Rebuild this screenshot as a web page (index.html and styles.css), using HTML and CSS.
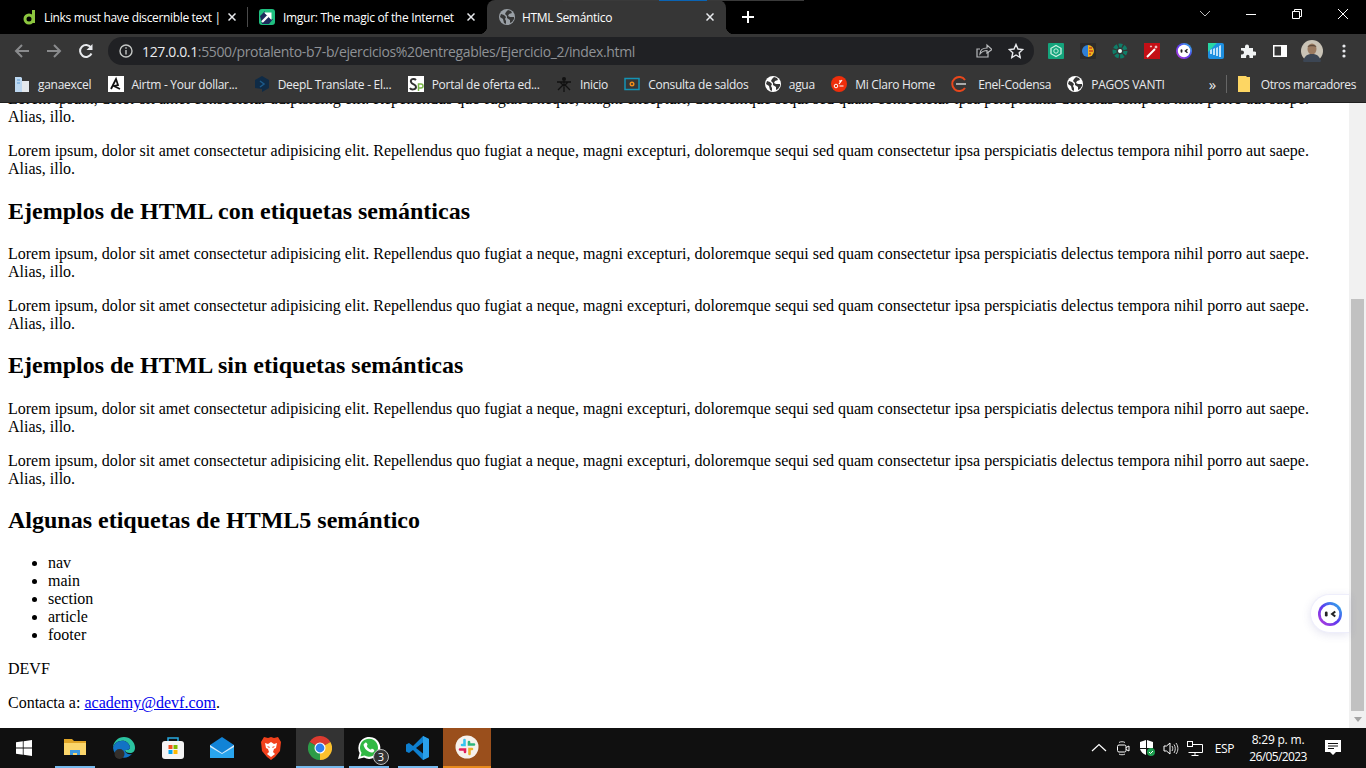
FILE: index.html
```html
<!DOCTYPE html>
<html lang="es">
<head>
  <meta charset="UTF-8" />
  <title>HTML Semántico</title>
  <link rel="stylesheet" href="styles.css">
</head>
<body>

  <svg class="defs" width="0" height="0">
    <symbol id="globe" viewBox="0 0 16 16">
      <circle cx="8" cy="8" r="8" fill="currentColor"/>
      <path d="M2 5l3 1 2 2-1 2 1 2v3l-2-1-1-4-3-2zM9 1l3 1 1 2-3 1-1 2 2 1 4 0 0 2-2 3-2 1 0-3-3-2 0-2-2-2 1-2z" fill="var(--land)"/>
    </symbol>
    <symbol id="tab-close" viewBox="0 0 8 8">
      <path d="M.5.500l7 7M7.500.500l-7 7" stroke="#e8eaed" stroke-width="1.500"/>
    </symbol>
  </svg>

  <!-- Tab strip -->
  <div class="tabstrip">
    <div class="screen-bar"><span class="screen-bar-blue"></span></div>
    <div class="tab first">
      <svg class="fav" viewBox="0 0 16 16"><circle cx="7" cy="10" r="4" fill="none" stroke="#8cc63f" stroke-width="3"/><path d="M11.500 1v13" stroke="#8cc63f" stroke-width="3"/></svg>
      <span class="tab-title">Links must have discernible text |</span>
      <svg class="tab-x"><use href="#tab-close"/></svg>
    </div>
    <div class="tab-sep"></div>
    <div class="tab">
      <svg class="fav" viewBox="0 0 16 16"><rect width="16" height="16" rx="3" fill="#1fbf80"/><path d="M1 7l5-5v3l5 0 0 5h3l-4 5H3z" fill="#1d2a5c"/><path d="M3 13l6-6" stroke="#fff" stroke-width="2.400"/><path d="M5 3.500h7.500V11z" fill="#fff"/></svg>
      <span class="tab-title">Imgur: The magic of the Internet</span>
      <svg class="tab-x"><use href="#tab-close"/></svg>
    </div>
    <div class="tab active">
      <svg class="fav globe-grey"><use href="#globe"/></svg>
      <span class="tab-title">HTML Semántico</span>
      <svg class="tab-x"><use href="#tab-close"/></svg>
    </div>
    <svg class="new-tab" viewBox="0 0 12 12"><path d="M6 0v12M0 6h12" stroke="#fff" stroke-width="2"/></svg>
    <div class="win-controls">
      <svg class="win-btn" viewBox="0 0 46 14"><path d="M18 4l5 5 5-5" fill="none" stroke="#bbb"/></svg>
      <svg class="win-btn" viewBox="0 0 46 14"><path d="M18 7.500h10" stroke="#fff"/></svg>
      <svg class="win-btn" viewBox="0 0 46 14"><path d="M18.500 4.500h7v7h-7zM20.500 4.500v-2h7v7h-2" fill="none" stroke="#fff"/></svg>
      <svg class="win-btn" viewBox="0 0 46 14"><path d="M18 2l10 10M28 2l-10 10" stroke="#fff"/></svg>
    </div>
  </div>

  <!-- Toolbar -->
  <div class="toolbar">
    <svg class="tool" viewBox="0 0 16 16"><path d="M15 8H2M8 2L2 8l6 6" fill="none" stroke="#8a8b8d" stroke-width="2"/></svg>
    <svg class="tool" viewBox="0 0 16 16"><path d="M1 8h13M8 2l6 6-6 6" fill="none" stroke="#8a8b8d" stroke-width="2"/></svg>
    <svg class="tool" viewBox="0 0 16 16"><path d="M13.500 10.500A6 6 0 1 1 13 4.500" fill="none" stroke="#e8eaed" stroke-width="2"/><path d="M14.500 1v6h-6z" fill="#e8eaed"/></svg>
    <div class="omnibox">
      <svg class="info" viewBox="0 0 14 14"><circle cx="7" cy="7" r="6" fill="none" stroke="#c4c7c5" stroke-width="1.400"/><path d="M7 6v4.500M7 3.300v1.500" stroke="#c4c7c5" stroke-width="1.400"/></svg>
      <span class="url"><b>127.0.0.1</b>:5500/protalento-b7-b/ejercicios%20entregables/Ejercicio_2/index.html</span>
      <svg class="omni-icon" viewBox="0 0 16 16"><path d="M12 9v5H1V6h3" fill="none" stroke="#b8babc" stroke-width="1.200"/><path d="M4 11c0-4 3-6 7-6V2l5 4.500L11 10V7.500c-3 0-5 1-7 3.500z" fill="none" stroke="#b8babc" stroke-width="1.200"/></svg>
      <svg class="omni-icon" viewBox="0 0 16 16"><path d="M8 1.500l2 4.500 4.800.5-3.600 3.200 1 4.800L8 12l-4.200 2.500 1-4.800L1.200 6.500 6 6z" fill="none" stroke="#e8eaed" stroke-width="1.400"/></svg>
    </div>
    <div class="ext-row">
      <svg class="ext" viewBox="0 0 16 16"><rect width="16" height="16" rx="1" fill="#14a47c"/><path d="M8 2.500l5 2.800v5.400l-5 2.800-5-2.800V5.300z" fill="none" stroke="#c9f1e2" stroke-width="1.300"/><circle cx="8" cy="8" r="2.200" fill="none" stroke="#c9f1e2"/></svg>
      <svg class="ext" viewBox="0 0 16 16"><rect width="16" height="16" rx="1" fill="#2b2b2b"/><path d="M8 2a6 6 0 0 0 0 12z" fill="#2f7fd6"/><path d="M8 2a6 6 0 0 1 0 12z" fill="#f0b31c"/><path d="M9 5h3M9 8h4M9 11h2" stroke="#c9451f" stroke-width="1.300"/></svg>
      <svg class="ext" viewBox="0 0 16 16"><circle cx="8" cy="8" r="5.500" fill="none" stroke="#0f7d68" stroke-width="4" stroke-dasharray="3.500 1.300"/><circle cx="8" cy="8" r="2" fill="#e8fff8"/></svg>
      <svg class="ext" viewBox="0 0 16 16"><rect width="16" height="16" fill="#c40f16"/><path d="M3 14L11 6" stroke="#fff" stroke-width="2"/><path d="M12 2l.6 1.400L14 4l-1.400.6L12 6l-.6-1.400L10 4l1.400-.6zM7 2l.4 1L8.400 3.400l-1 .4L7 5l-.4-1.200-1-.4 1-.4z" fill="#fff"/></svg>
      <svg class="ext" viewBox="0 0 16 16"><use href="#mascot"/></svg>
      <svg class="ext" viewBox="0 0 16 16"><rect width="16" height="16" rx="2" fill="#1d8fe0"/><path d="M0 0h9L0 9z" fill="#27d6a5"/><path d="M2 7l2-1v5H2zM5 6l2-1v7H5zM8 5l2-1v9H8zM11 3l2-1v12h-2z" fill="#bfe2fb"/></svg>
      <svg class="ext" viewBox="0 0 16 16"><path d="M1 5h4V3.500a2 2 0 0 1 4 0V5h4v3.500h1.500a2 2 0 0 1 0 4H13V15H9.500v-1.500a1.700 1.700 0 0 0-3.400 0V15H1v-3.500h1a2 2 0 0 0 0-4H1z" fill="#f1f3f4"/></svg>
      <svg class="ext" viewBox="0 0 16 16"><rect x="1" y="2" width="14" height="12" fill="#fff"/><rect x="2.500" y="3.500" width="6.500" height="9" fill="#363636"/></svg>
      <svg class="avatar" viewBox="0 0 22 22"><circle cx="11" cy="11" r="11" fill="#c9c3b6"/><ellipse cx="11" cy="9" rx="4.500" ry="5.500" fill="#9a7a60"/><path d="M6.500 7c1-3 8-3 9 0-2-1-7-1-9 0z" fill="#5c4a3c"/><path d="M2 21c2-6 5-7 9-7s7 1 9 7a11 11 0 0 1-18 0z" fill="#3c4654"/></svg>
      <svg class="ext" viewBox="0 0 16 16"><circle cx="8" cy="3" r="1.600" fill="#e8eaed"/><circle cx="8" cy="8" r="1.600" fill="#e8eaed"/><circle cx="8" cy="13" r="1.600" fill="#e8eaed"/></svg>
    </div>
  </div>

  <!-- Bookmarks bar -->
  <div class="bookmarks">
    <div class="bm"><svg class="fav" viewBox="0 0 16 16"><path d="M1 1h6l1 1v14H1z" fill="#bcd7f0"/><path d="M8 5h7v11H8z" fill="#e4e8ec"/><path d="M3 4h3M3 7h3" stroke="#5b9bd5"/></svg>ganaexcel</div>
    <div class="bm"><svg class="fav" viewBox="0 0 16 16"><rect width="16" height="16" fill="#fff"/><path d="M3 13L8 3l2 6-4 1 6 3" fill="none" stroke="#111" stroke-width="1.800"/></svg>Airtm - Your dollar...</div>
    <div class="bm"><svg class="fav" viewBox="0 0 16 16"><path d="M8 0l7 4v8l-7 4v-3l-7-1V4z" fill="#0f2b46"/><path d="M6 5l4 3-4 3" fill="none" stroke="#1c5a8a" stroke-width="1.500"/></svg>DeepL Translate - El...</div>
    <div class="bm"><svg class="fav" viewBox="0 0 16 16"><rect width="16" height="16" fill="#fff"/><path d="M8 4C6 2 2 3 3 6s5 2 5 5-5 3-6 1" fill="none" stroke="#333" stroke-width="2"/><path d="M10.500 15V8h2.500a2 2 0 0 1 0 4h-2.500" fill="none" stroke="#7ab648" stroke-width="1.500"/></svg>Portal de oferta ed...</div>
    <div class="bm"><svg class="fav" viewBox="0 0 16 16"><circle cx="8" cy="3" r="2" fill="#111"/><path d="M1 6l14 0M8 5v11M2 14l6-6 6 6M4 6l4 4 4-4" stroke="#111" stroke-width="1.300" fill="none"/></svg>Inicio</div>
    <div class="bm"><svg class="fav" viewBox="0 0 16 16"><rect x="1" y="2.500" width="14" height="11" fill="none" stroke="#1493b5" stroke-width="1.500"/><circle cx="8" cy="8" r="2.500" fill="#f08c1a"/><circle cx="8" cy="8" r="1" fill="#333"/></svg>Consulta de saldos</div>
    <div class="bm"><svg class="fav globe-white"><use href="#globe"/></svg>agua</div>
    <div class="bm"><svg class="fav" viewBox="0 0 16 16"><circle cx="8" cy="8" r="8" fill="#ee2e0b"/><circle cx="5" cy="10" r="1.800" fill="none" stroke="#fff"/><path d="M8 8l3-4M8.500 10h4M9 4v2" stroke="#fff" stroke-width="1.200"/></svg>Mi Claro Home</div>
    <div class="bm enel"><svg class="fav" viewBox="0 0 16 16"><path d="M14 4A7 7 0 1 0 14 12" fill="none" stroke="#e8471c" stroke-width="2"/><path d="M5 8h10" stroke="#aaa" stroke-width="2"/></svg>Enel-Codensa</div>
    <div class="bm"><svg class="fav globe-white"><use href="#globe"/></svg>PAGOS VANTI</div>
    <div class="bm-end">
      <span class="bm-more">»</span>
      <span class="bm-sep"></span>
      <div class="bm bm-other"><svg class="folder" viewBox="0 0 12 16"><path d="M0 0h8l1 1h3v15H0z" fill="#fdd663"/></svg>Otros marcadores</div>
    </div>
  </div>

  <!-- Page -->
  <div class="viewport">
    <div class="content">
      <p>Lorem ipsum, dolor sit amet consectetur adipisicing elit. Repellendus quo fugiat a neque, magni excepturi, doloremque sequi sed quam consectetur ipsa perspiciatis delectus tempora nihil porro aut saepe. Alias, illo.</p>
      <p>Lorem ipsum, dolor sit amet consectetur adipisicing elit. Repellendus quo fugiat a neque, magni excepturi, doloremque sequi sed quam consectetur ipsa perspiciatis delectus tempora nihil porro aut saepe. Alias, illo.</p>
      <h2>Ejemplos de HTML con etiquetas semánticas</h2>
      <p>Lorem ipsum, dolor sit amet consectetur adipisicing elit. Repellendus quo fugiat a neque, magni excepturi, doloremque sequi sed quam consectetur ipsa perspiciatis delectus tempora nihil porro aut saepe. Alias, illo.</p>
      <p>Lorem ipsum, dolor sit amet consectetur adipisicing elit. Repellendus quo fugiat a neque, magni excepturi, doloremque sequi sed quam consectetur ipsa perspiciatis delectus tempora nihil porro aut saepe. Alias, illo.</p>
      <h2>Ejemplos de HTML sin etiquetas semánticas</h2>
      <p>Lorem ipsum, dolor sit amet consectetur adipisicing elit. Repellendus quo fugiat a neque, magni excepturi, doloremque sequi sed quam consectetur ipsa perspiciatis delectus tempora nihil porro aut saepe. Alias, illo.</p>
      <p>Lorem ipsum, dolor sit amet consectetur adipisicing elit. Repellendus quo fugiat a neque, magni excepturi, doloremque sequi sed quam consectetur ipsa perspiciatis delectus tempora nihil porro aut saepe. Alias, illo.</p>
      <h2>Algunas etiquetas de HTML5 semántico</h2>
      <ul>
        <li>nav</li>
        <li>main</li>
        <li>section</li>
        <li>article</li>
        <li>footer</li>
      </ul>
      <p>DEVF</p>
      <p>Contacta a: <a href="#">academy@devf.com</a>.</p>
    </div>
    <div class="scrollbar">
      <div class="thumb-track"><div class="thumb"></div></div>
      <div class="arrow-down"></div>
    </div>
    <div class="widget">
      <svg class="widget-icon" viewBox="0 0 16 16">
        <symbol id="mascot" viewBox="0 0 16 16">
          <defs>
            <linearGradient id="ring" x1="0" y1="1" x2="1" y2="0">
              <stop offset="0" stop-color="#c13bd8"/>
              <stop offset=".5" stop-color="#5a3bf0"/>
              <stop offset="1" stop-color="#27c3e8"/>
            </linearGradient>
          </defs>
          <circle cx="8" cy="8" r="8" fill="url(#ring)"/>
          <circle cx="8" cy="8" r="6.200" fill="#fff"/>
          <rect x="4.600" y="6.300" width="1.800" height="3.400" rx=".9" fill="#222"/>
          <path d="M11.500 6.300L9.400 8l2.100 1.700" fill="none" stroke="#222" stroke-width="1.400"/>
        </symbol>
        <use href="#mascot"/>
      </svg>
    </div>
  </div>

  <!-- Taskbar -->
  <div class="taskbar">
    <div class="start">
      <svg class="start-icon" viewBox="0 0 16 16"><path d="M0 2.300l6.800-1v6.300H0zM7.600 1.200L16 0v7.600H7.600zM0 8.400h6.800v6.300l-6.800-1zM7.600 8.400H16V16l-8.400-1.200z" fill="#fff"/></svg>
    </div>
    <div class="task-apps">
      <div class="task open"><svg class="task-icon" viewBox="0 0 24 24"><path d="M1 3h8l2 2h12v4H1z" fill="#e0a526"/><path d="M1 7h22v12H1z" fill="#fbd66b"/><path d="M7 19v-5h10v5h-3v-2h-4v2z" fill="#3f9ae0"/></svg></div>
      <div class="task"><svg class="task-icon" viewBox="0 0 24 24"><path d="M1 12a11 11 0 0 1 22 0c0 3-2 5-5 5-3 0-5-1-5-3 2 0 5 0 5-3-1-4-5-7-9-6-4 0-7 3-8 7z" fill="#2bc3a0"/><path d="M1 12c1-4 4-7 8-7 4-1 8 2 9 6 0 3-3 3-5 3 0 3 3 5 7 4a11 11 0 0 1-19-6z" fill="#1273c4"/><circle cx="7.500" cy="18" r="5" fill="#33302d"/></svg></div>
      <div class="task"><svg class="task-icon" viewBox="0 0 24 24"><path d="M7 6V2h10v4" fill="none" stroke="#27a9e0" stroke-width="1.500"/><rect x="1" y="5" width="22" height="18" rx="3" fill="#f4f4f4"/><rect x="7.500" y="9" width="4" height="4" fill="#f25022"/><rect x="12.500" y="9" width="4" height="4" fill="#7fba00"/><rect x="7.500" y="14" width="4" height="4" fill="#00a4ef"/><rect x="12.500" y="14" width="4" height="4" fill="#ffb900"/></svg></div>
      <div class="task"><svg class="task-icon" viewBox="0 0 24 24"><path d="M0 9l12-8 12 8v13H0z" fill="#1183d6"/><path d="M0 9l12 8 12-8v4l-12 6-12-6z" fill="#cfe9fa"/><path d="M0 22V11l12 7 12-7v11z" fill="#29a5ee"/></svg></div>
      <div class="task"><svg class="task-icon" viewBox="0 0 24 24"><path d="M5 1l4 1 3-1 3 1 4-1 3 5-1 9-5 6-4 3-4-3-5-6-1-9z" fill="#f1411c"/><path d="M6 7l3 1 3-2 3 2 3-1-1 5-2 1-1 3 2 2-4 3-4-3 2-2-1-3-2-1z" fill="#fff"/><path d="M8 10l3 1-1 1zM16 10l-3 1 1 1z" fill="#f1411c"/></svg></div>
      <div class="task current"><svg class="task-icon" viewBox="0 0 24 24"><path d="M1.600 6A12 12 0 0 1 22.400 6L12 12z" fill="#dc3b30"/><path d="M1.600 6A12 12 0 0 0 12 24V12z" fill="#2d9c48"/><path d="M22.400 6A12 12 0 0 1 12 24V12z" fill="#fbc02d"/><circle cx="12" cy="12" r="5.500" fill="#fff"/><circle cx="12" cy="12" r="4.400" fill="#2f7ff0"/></svg></div>
      <div class="task open"><svg class="task-icon" viewBox="0 0 24 24"><path d="M1 23l1.600-6A11 11 0 1 1 7 21.500z" fill="#fff"/><path d="M3.500 20.500l1-3.800A9 9 0 1 1 7.500 19.500z" fill="#31b944"/><path d="M8 7c1-1 2 0 2.500 1.500.2 1-1 1-.5 2 .7 1.200 2 2.500 3.300 3 1 .3 1-1 2-.7 1.500.5 2.500 1.300 1.800 2.500-1 1.500-3 1.500-5 .5-3-1.500-5-4-5.500-6.500-.1-1 .5-1.700 1.400-2.300z" fill="#fff"/></svg><span class="badge">3</span></div>
      <div class="task open"><svg class="task-icon" viewBox="0 0 24 24"><path d="M17 0l6 3v18l-6 3L7 14l-4 3-3-1.500v-7L3 7l4 3z" fill="#0e7fcf"/><path d="M17 6.500L10 12l7 5.500z" fill="#101010"/><path d="M17 0l6 3v18l-6 3z" fill="#2aa0ea"/></svg></div>
      <div class="task flagged"><svg class="task-icon" viewBox="0 0 24 24"><circle cx="12" cy="12" r="11.500" fill="#f6f1ec"/><path d="M9.500 5v5H7" fill="none" stroke="#36c5f0" stroke-width="2.600" stroke-linecap="round"/><path d="M19 9.500h-5V7" fill="none" stroke="#2eb67d" stroke-width="2.600" stroke-linecap="round"/><path d="M14.500 19v-5H17" fill="none" stroke="#ecb22e" stroke-width="2.600" stroke-linecap="round"/><path d="M5 14.500h5V17" fill="none" stroke="#e01e5a" stroke-width="2.600" stroke-linecap="round"/></svg></div>
    </div>
    <div class="tray">
      <svg class="tray-icon" viewBox="0 0 16 16"><path d="M1 11l7-6.500 7 6.500" fill="none" stroke="#fff" stroke-width="1.200"/></svg>
      <svg class="tray-icon" viewBox="0 0 16 16"><path d="M4 2.500C5 1.500 9 1.500 10 2.500M4 14c1 1 5 1 6 0" fill="none" stroke="#ddd"/><rect x="2.500" y="5" width="8.500" height="7" rx="1.500" fill="none" stroke="#fff"/><path d="M11 7.500l3-1.500v5l-3-1.500" fill="none" stroke="#fff"/></svg>
      <svg class="tray-icon" viewBox="0 0 16 16"><path d="M1 2l6-2 0 8H1zM8 0l6 2v6H8zM1 9h6v6C4 14 2 12 1 9z" fill="#fff"/><circle cx="12" cy="12" r="4" fill="#1c9e4e"/><path d="M10 12l1.500 1.500L14 11" fill="none" stroke="#fff"/></svg>
      <svg class="tray-icon" viewBox="0 0 16 16"><path d="M1 6h2.500L7 3v11l-3.500-3H1z" fill="none" stroke="#fff"/><path d="M9 6c1 1.500 1 3.500 0 5M11 4.500c1.700 2.500 1.700 6 0 8.500M13 3c2.500 3.500 2.500 8 0 11" fill="none" stroke="#ddd"/></svg>
      <svg class="tray-icon" viewBox="0 0 16 16"><path d="M3 4.500h12.500v8H1.500M8 12.500v3M4.500 15.500h7" fill="none" stroke="#fff"/><rect x=".5" y="1.500" width="5" height="5" fill="#101010" stroke="#fff"/></svg>
      <span class="lang">ESP</span>
      <div class="clock"><span>8:29 p. m.</span><span class="clock-date">26/05/2023</span></div>
      <svg class="notif" viewBox="0 0 16 16"><path d="M0 0h16v12h-5l-3 3-3-3H0z" fill="#fff"/><path d="M3 3.500h10M3 6h10M3 8.500h6" stroke="#101010"/></svg>
    </div>
  </div>

</body>
</html>
```

FILE: styles.css
```css
html, body {
  margin: 0;
  padding: 0;
  height: 100%;
  overflow: hidden;
  background-color: #fff;
}

body {
  display: flex;
  flex-direction: column;
  height: 768px;
  font-family: "Open Sans", sans-serif;
  --land: #363636;
}

.defs {
  position: absolute;
}

.fav {
  width: 16px;
  height: 16px;
  flex-shrink: 0;
}

.globe-grey {
  color: #9aa0a6;
}

.globe-white {
  color: #fff;
}

/* tab strip */
.tabstrip {
  position: relative;
  display: flex;
  align-items: center;
  height: 34px;
  flex-shrink: 0;
  padding-left: 11px;
  background-color: #000;
  color: #fff;
  font-size: 12px;
}

.screen-bar {
  position: absolute;
  top: 0;
  left: 563px;
  width: 241px;
  height: 1px;
  padding-left: 96px;
  box-sizing: border-box;
  background-color: #3a3a3a;
  z-index: 1;
}

.screen-bar-blue {
  display: block;
  width: 48px;
  height: 1px;
  background-color: #0a64b4;
}

.tab {
  position: relative;
  display: flex;
  align-items: center;
  width: 239px;
  height: 34px;
  padding-left: 11px;
  box-sizing: border-box;
}

.tab.first {
  width: 236px;
}

.tab-sep {
  width: 1px;
  height: 20px;
  background-color: #4a4a4a;
}

.tab.active {
  padding-left: 12px;
  background-color: #363636;
  border-radius: 8px 8px 0 0;
}

.tab.active::before,
.tab.active::after {
  content: "";
  position: absolute;
  bottom: 0;
  width: 8px;
  height: 8px;
}

.tab.active::before {
  left: -8px;
  background: radial-gradient(circle at 0 0, #000 8px, #363636 8.500px);
}

.tab.active::after {
  right: -8px;
  background: radial-gradient(circle at 100% 0, #000 8px, #363636 8.500px);
}

.tab-title {
  flex: 1;
  margin-left: 8px;
  white-space: nowrap;
  overflow: hidden;
  letter-spacing: -0.3px;
}

.tab.active .tab-title {
  margin-left: 7px;
}

.tab.first .tab-title {
  margin-left: 6px;
  letter-spacing: -0.35px;
}

.tab-x {
  width: 8px;
  height: 8px;
  margin: 0 12px 0 4px;
  flex-shrink: 0;
}

.tab.first .tab-x {
  margin-right: 11px;
}

.new-tab {
  width: 12px;
  height: 12px;
  margin-left: 16px;
}

.win-controls {
  display: flex;
  margin-left: auto;
}

.win-btn {
  width: 46px;
  height: 14px;
  margin-bottom: 6px;
}

/* toolbar */
.toolbar {
  display: flex;
  align-items: center;
  height: 34px;
  flex-shrink: 0;
  padding-left: 14px;
  background-color: #363636;
}

.tool {
  width: 16px;
  height: 16px;
  margin-right: 16px;
}

.omnibox {
  display: flex;
  align-items: center;
  width: 926px;
  height: 28px;
  margin-left: -2px;
  padding: 0 10px 0 11px;
  box-sizing: border-box;
  border-radius: 14px;
  background-color: #202124;
}

.info {
  width: 14px;
  height: 14px;
  margin-right: 9px;
}

.url {
  flex: 1;
  font-size: 14px;
  letter-spacing: -0.36px;
  color: #8f9296;
  white-space: nowrap;
}

.url b {
  font-weight: 400;
  color: #e8eaed;
}

.omni-icon {
  width: 16px;
  height: 16px;
  margin-left: 16px;
}

.ext-row {
  display: flex;
  align-items: center;
  gap: 16px;
  margin-left: 14px;
}

.ext {
  width: 16px;
  height: 16px;
}

.avatar {
  width: 22px;
  height: 22px;
  margin: 0 -3px;
}

/* bookmarks */
.bookmarks {
  display: flex;
  align-items: center;
  height: 32px;
  flex-shrink: 0;
  padding: 0 10px 2px 14px;
  background-color: #363636;
  border-bottom: 1px solid #1f1f1f;
  color: #e8eaed;
  font-size: 12px;
  letter-spacing: -0.28px;
}

.bm {
  display: flex;
  align-items: center;
  gap: 8px;
  margin-right: 16.300px;
  white-space: nowrap;
}

.bm.enel {
  gap: 11px;
}

.bm-end {
  display: flex;
  align-items: center;
  margin-left: auto;
}

.bm-more {
  font-size: 15px;
  line-height: 12px;
  margin-right: 10px;
  margin-left: -1px;
}

.bm-sep {
  width: 1px;
  height: 18px;
  margin-right: 11px;
  background-color: #666;
}

.bm-other {
  margin-right: 0;
  gap: 11px;
  letter-spacing: -0.4px;
}

.folder {
  width: 12px;
  height: 16px;
}

/* page */
.viewport {
  position: relative;
  display: flex;
  flex: 1;
  min-height: 0;
  overflow: hidden;
  font-family: "Liberation Serif", serif;
  font-size: 16px;
  color: #000;
}

.content {
  flex: 1;
  min-width: 0;
  margin-top: -29px;
  padding: 0 8px;
}

.content p {
  margin: 16px 0;
}

.content h2 {
  font-size: 24px;
  margin: 19.560px 0 20.280px;
}

.content ul {
  margin: 16px 0;
  padding-left: 40px;
}

.scrollbar {
  display: flex;
  flex-direction: column;
  width: 17px;
  flex-shrink: 0;
  background-color: #f1f1f1;
}

.thumb-track {
  flex: 1;
  padding: 196px 2px 0;
}

.thumb {
  height: 412px;
  background-color: #c1c1c1;
}

.arrow-down {
  align-self: center;
  width: 0;
  height: 0;
  margin-bottom: 6px;
  border-left: 4px solid transparent;
  border-right: 4px solid transparent;
  border-top: 5px solid #a3a3a3;
}

.widget {
  position: absolute;
  top: 491px;
  right: 17px;
  display: flex;
  align-items: center;
  width: 39px;
  height: 39px;
  padding-left: 7px;
  box-sizing: border-box;
  background-color: #fff;
  border: 1px solid #eeeefb;
  border-right: none;
  border-radius: 20px 0 0 20px;
  box-shadow: 0 2px 8px rgba(80, 80, 160, 0.15);
}

.widget-icon {
  width: 24px;
  height: 24px;
}

/* taskbar */
.taskbar {
  display: flex;
  align-items: stretch;
  height: 40px;
  flex-shrink: 0;
  background-color: #101010;
  color: #fff;
  font-size: 12px;
}

.start {
  display: flex;
  align-items: center;
  justify-content: center;
  width: 48px;
}

.start-icon {
  width: 16px;
  height: 16px;
}

.task-apps {
  display: flex;
  gap: 1px;
  margin-left: 3px;
}

.task {
  position: relative;
  display: flex;
  align-items: center;
  justify-content: center;
  width: 48px;
  box-sizing: border-box;
}

.task-icon {
  width: 24px;
  height: 24px;
}

.task.open {
  background: linear-gradient(#76b9ed, #76b9ed) center bottom / 40px 2px no-repeat;
}

.task.current {
  background: linear-gradient(#76b9ed, #76b9ed) center bottom / 48px 2px no-repeat, #333;
}

.task.flagged {
  background-color: #9a4f1c;
  border-bottom: 2px solid #e88a1c;
}

.badge {
  position: absolute;
  right: 4px;
  bottom: 3px;
  width: 14px;
  height: 14px;
  line-height: 14px;
  text-align: center;
  font-size: 11px;
  border: 1px solid #bbb;
  border-radius: 50%;
  background-color: #333;
}

.tray {
  display: flex;
  align-items: center;
  margin-left: auto;
}

.tray-icon {
  width: 16px;
  height: 16px;
  margin-right: 8px;
}

.lang {
  margin: 0 15px 0 4px;
  letter-spacing: -0.4px;
}

.clock {
  display: flex;
  flex-direction: column;
  align-items: center;
  width: 58px;
  line-height: 17px;
  margin-right: 18px;
  white-space: nowrap;
  letter-spacing: -0.2px;
}

.clock-date {
  letter-spacing: -0.6px;
}

.notif {
  width: 16px;
  height: 16px;
  margin-right: 25px;
}
```
